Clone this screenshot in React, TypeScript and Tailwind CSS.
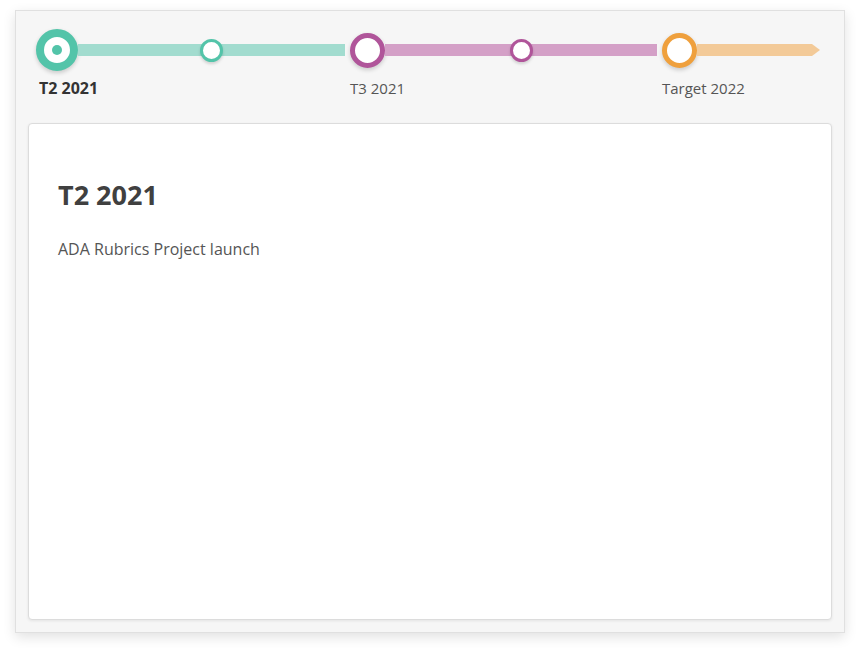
import React from 'react';

type Milestone = {
  label: string;
  active?: boolean;
  width: string;
  circle: string;
  dot?: string;
  line: string;
  arrow?: boolean;
};

const MILESTONES: Milestone[] = [
  { label: 'T2 2021', active: true, width: 'w-[314px]', circle: 'border-[#53c4a9]', dot: 'border-[#53c4a9]', line: 'bg-[#a2dccf]' },
  { label: 'T3 2021', width: 'w-[312px]', circle: 'border-[#b0559a]', dot: 'border-[#b0559a]', line: 'bg-[#d4a0c7]' },
  { label: 'Target 2022', width: 'w-[158px]', circle: 'border-[#efa03d]', line: 'bg-[#f3ca98]', arrow: true },
];

const Segment: React.FC<{ m: Milestone }> = ({ m }) => (
  <div className={`flex shrink-0 flex-col ${m.width}`}>
    <div className="flex h-[42px] items-center">
      {m.active ? (
        <div className="flex h-[42px] w-[42px] shrink-0 items-center justify-center rounded-full border-[8px] border-[#53c4a9] bg-white shadow-[0_2px_4px_rgba(0,0,0,0.18)]">
          <div className="h-[10px] w-[10px] rounded-full bg-[#53c4a9]" />
        </div>
      ) : (
        <div className={`h-[35px] w-[35px] shrink-0 rounded-full border-[5px] bg-white shadow-[0_2px_4px_rgba(0,0,0,0.18)] ${m.circle}`} />
      )}
      {m.arrow ? (
        <div className={`h-[12px] flex-1 [clip-path:polygon(0_0,calc(100%-8px)_0,100%_50%,calc(100%-8px)_100%,0_100%)] ${m.line}`} />
      ) : (
        <div className={`mr-[5px] flex h-[12px] flex-1 items-center justify-center ${m.line}`}>
          <div className={`h-[23px] w-[23px] shrink-0 rounded-full border-[3px] bg-white shadow-[0_2px_3px_rgba(0,0,0,0.15)] ${m.dot}`} />
        </div>
      )}
    </div>
    <div
      className={
        m.active
          ? 'mt-[7px] pl-[3px] text-[16px] font-bold leading-[20px] text-[#333]'
          : 'mt-[7px] text-[15px] leading-[20px] text-[#555]'
      }
    >
      {m.label}
    </div>
  </div>
);

export default function App() {
  return (
    <div className="min-h-screen bg-white pl-[15px] pt-[10px] font-['Open_Sans',sans-serif]">
      <div className="flex h-[623px] w-[830px] flex-col border border-[#e0e0e0] bg-[#f6f6f6] p-[12px] shadow-[0_4px_12px_rgba(0,0,0,0.12)]">
        <div className="flex h-[100px] shrink-0 pl-[8px] pt-[6px]">
          {MILESTONES.map(m => (
            <Segment key={m.label} m={m} />
          ))}
        </div>
        <div className="flex-1 rounded-[4px] border border-[#dcdcdc] bg-white px-[29px] pt-[54px] shadow-[0_1px_3px_rgba(0,0,0,0.08)]">
          <h1 className="text-[27px] font-bold leading-[34px] text-[#404040]">T2 2021</h1>
          <p className="mt-[26px] text-[16px] leading-[22px] text-[#555]">ADA Rubrics Project launch</p>
        </div>
      </div>
    </div>
  );
}
